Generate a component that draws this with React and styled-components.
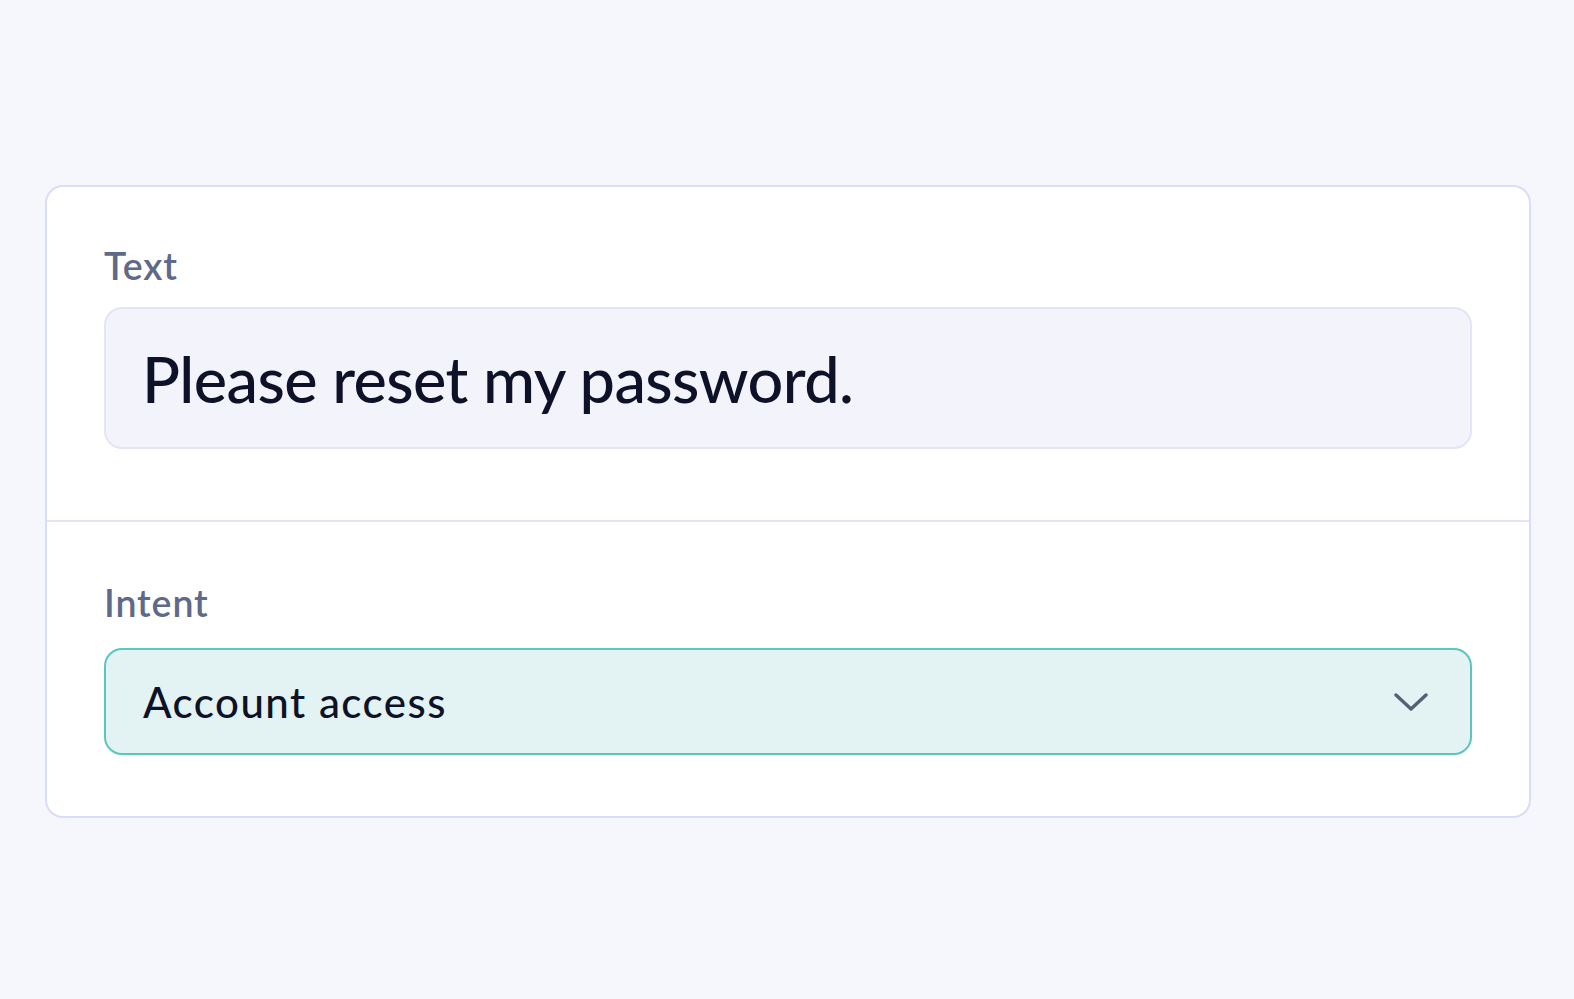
import React from "react";
import styled, { createGlobalStyle } from "styled-components";

const Global = createGlobalStyle`
  html, body { margin: 0; padding: 0; background: #f6f7fc; }
  body { font-family: Lato, "Noto Sans", sans-serif; -webkit-font-smoothing: antialiased; }
  * { box-sizing: border-box; }
`;

const Page = styled.div`
  min-height: 999px;
  padding: 185px 43px 0 45px;
`;

const Card = styled.div`
  background: #ffffff;
  border: 2px solid #d9ddf5;
  border-radius: 18px;
  overflow: hidden;
`;

const Section = styled.div`
  display: flex;
  flex-direction: column;
  padding: ${(p) => p.$top}px 57px ${(p) => p.$bottom}px;
  border-top: ${(p) => (p.$divider ? "2px solid #e2e4f6" : "none")};
`;

const Label = styled.div`
  font-size: 37.5px;
  font-weight: 600;
  color: #5f6989;
  line-height: normal;
  letter-spacing: 0.9px;
  margin-bottom: ${(p) => p.$gap}px;
`;

const TextBox = styled.div`
  height: 142px;
  display: flex;
  align-items: center;
  padding: 0 36px;
  background: #f3f3fb;
  border: 2px solid #e3e5f5;
  border-radius: 18px;
  font-size: 63px;
  font-weight: 500;
  color: #0e1228;
  letter-spacing: -0.6px;
  white-space: nowrap;
`;

const Select = styled.div`
  height: 107px;
  display: flex;
  align-items: center;
  justify-content: space-between;
  padding: 0 42px 0 37px;
  background: #e3f3f3;
  border: 2px solid #5cc6bd;
  border-radius: 18px;
  font-size: 42px;
  font-weight: 500;
  color: #0e1228;
  letter-spacing: 1.5px;
`;

const Chevron = () => (
  <svg width="34" height="21" viewBox="0 0 34 21" fill="none">
    <path d="M2 4 L17 18 L32 4" stroke="#575e77" strokeWidth="3.4" strokeLinecap="round" strokeLinejoin="round" />
  </svg>
);

export default function App() {
  return (
    <>
      <Global />
      <Page>
        <Card>
          <Section $top={56} $bottom={71}>
            <Label $gap={19}>Text</Label>
            <TextBox>Please reset my password.</TextBox>
          </Section>
          <Section $divider $top={58} $bottom={61}>
            <Label $gap={23}>Intent</Label>
            <Select>
              <span>Account access</span>
              <Chevron />
            </Select>
          </Section>
        </Card>
      </Page>
    </>
  );
}
